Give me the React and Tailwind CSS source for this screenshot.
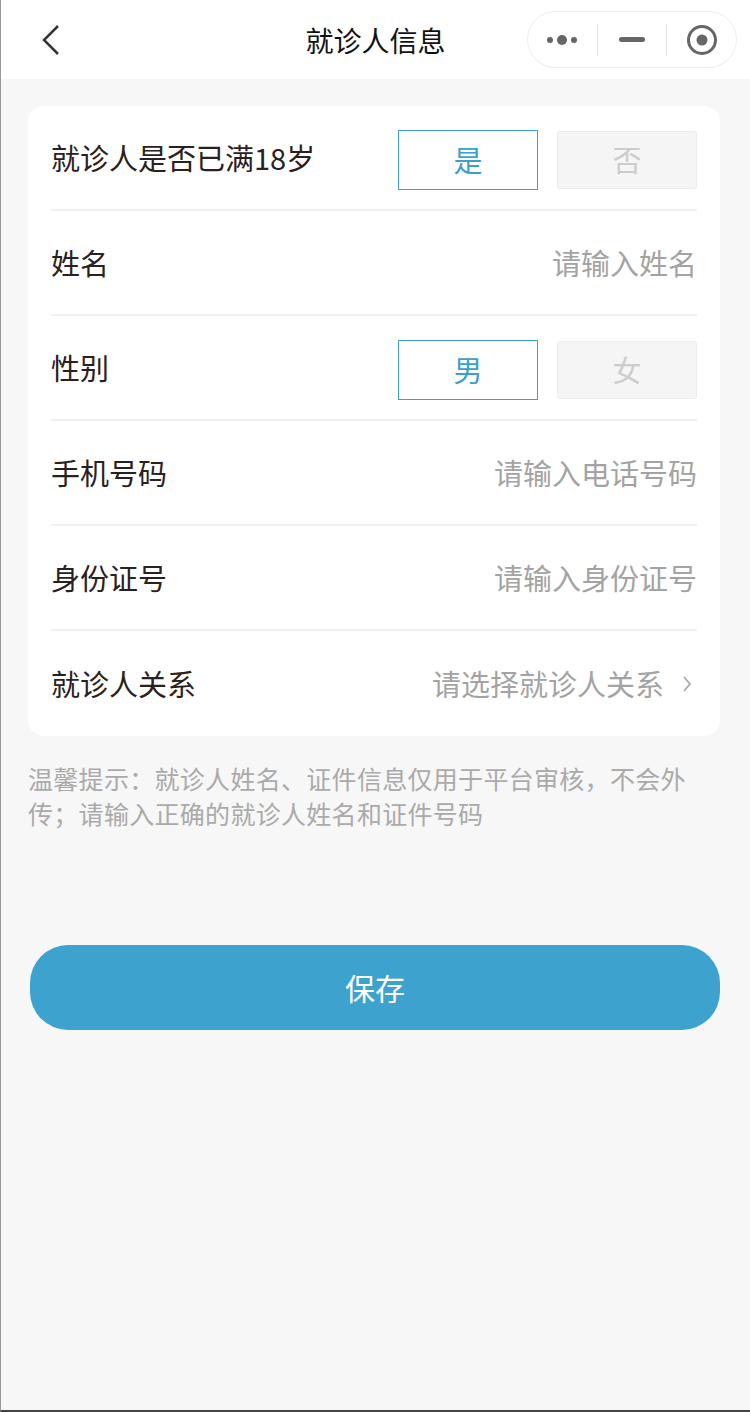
import React, { useState } from "react";

const FONT = { fontFamily: '"Noto Sans CJK SC", "Noto Sans", sans-serif' };

function Capsule() {
  return (
    <div className="flex items-center h-[57px] w-[210px] rounded-full border border-[#ececec] bg-white">
      <div className="flex-1 flex items-center justify-center">
        <svg width="34" height="12" viewBox="0 0 34 12">
          <circle cx="5" cy="6" r="3" fill="#666" />
          <circle cx="17" cy="6" r="5" fill="#666" />
          <circle cx="29" cy="6" r="3" fill="#666" />
        </svg>
      </div>
      <div className="w-px h-[32px] bg-[#e2e2e2]" />
      <div className="flex-1 flex items-center justify-center">
        <div className="w-[26px] h-[5px] rounded-full bg-[#666]" />
      </div>
      <div className="w-px h-[32px] bg-[#e2e2e2]" />
      <div className="flex-1 flex items-center justify-center">
        <svg width="32" height="32" viewBox="0 0 32 32">
          <circle cx="16" cy="16" r="13.5" fill="none" stroke="#666" strokeWidth="3" />
          <circle cx="16" cy="16" r="5.5" fill="#666" />
        </svg>
      </div>
    </div>
  );
}

function Toggle({ options, value, onChange }) {
  return (
    <div className="flex items-center gap-[19px] pt-[5px]">
      {options.map((o) => {
        const active = o === value;
        return (
          <button
            key={o}
            onClick={() => onChange(o)}
            className={
              active
                ? "w-[140px] h-[60px] border border-[#3ba0d0] bg-white text-[#3ba0d0] text-[29px]"
                : "w-[140px] h-[58px] rounded-[3px] border border-[#ececec] bg-[#f5f5f5] text-[#cccccc] text-[29px]"
            }
          >
            {o}
          </button>
        );
      })}
    </div>
  );
}

function Row({ label, last, children }) {
  return (
    <div
      className={
        "h-[105px] flex items-center justify-between " +
        (last ? "" : "border-b-2 border-[#f0f0f0]")
      }
    >
      <span className="text-[29px] text-[#2b2020]">{label}</span>
      {children}
    </div>
  );
}

export default function App() {
  const [adult, setAdult] = useState("是");
  const [gender, setGender] = useState("男");

  return (
    <div
      style={FONT}
      className="min-h-[1412px] bg-[#f7f7f7] border-l border-[#999] border-b-2 border-b-[#444]"
    >
      <div className="h-[79px] bg-white flex items-center justify-between pl-[39px] pr-[13px] relative">
        <svg width="22" height="32" viewBox="0 0 22 32">
          <path d="M18 2 L4 16 L18 30" fill="none" stroke="#333" strokeWidth="2.5" />
        </svg>
        <div className="absolute left-0 right-0 top-0 h-[79px] flex items-center justify-center pointer-events-none">
          <span className="text-[28px] text-[#111]">就诊人信息</span>
        </div>
        <Capsule />
      </div>

      <div className="ml-[27px] mr-[30px] mt-[27px] bg-white rounded-[16px] pl-[23px] pr-[23px]">
        <Row label="就诊人是否已满18岁">
          <Toggle options={["是", "否"]} value={adult} onChange={setAdult} />
        </Row>
        <Row label="姓名">
          <span className="text-[29px] text-[#a3a3a3]">请输入姓名</span>
        </Row>
        <Row label="性别">
          <Toggle options={["男", "女"]} value={gender} onChange={setGender} />
        </Row>
        <Row label="手机号码">
          <span className="text-[29px] text-[#a3a3a3]">请输入电话号码</span>
        </Row>
        <Row label="身份证号">
          <span className="text-[29px] text-[#a3a3a3]">请输入身份证号</span>
        </Row>
        <Row label="就诊人关系" last>
          <div className="flex items-center gap-[18px] pr-[5px]">
            <span className="text-[29px] text-[#a3a3a3]">请选择就诊人关系</span>
            <svg width="10" height="18" viewBox="0 0 10 18">
              <path d="M2 2 L8 9 L2 16" fill="none" stroke="#aaa" strokeWidth="1.8" />
            </svg>
          </div>
        </Row>
      </div>

      <p className="mt-[25px] pl-[27px] w-[710px] text-[25px] leading-[35px] tracking-[0.3px] text-[#aaaaaa]">
        温馨提示：就诊人姓名、证件信息仅用于平台审核，不会外传；请输入正确的就诊人姓名和证件号码
      </p>

      <div className="mt-[114px] pl-[29px] pr-[30px]">
        <button className="w-full h-[85px] rounded-[38px] bg-[#3ea2cf] text-white text-[30px]">
          保存
        </button>
      </div>
    </div>
  );
}
